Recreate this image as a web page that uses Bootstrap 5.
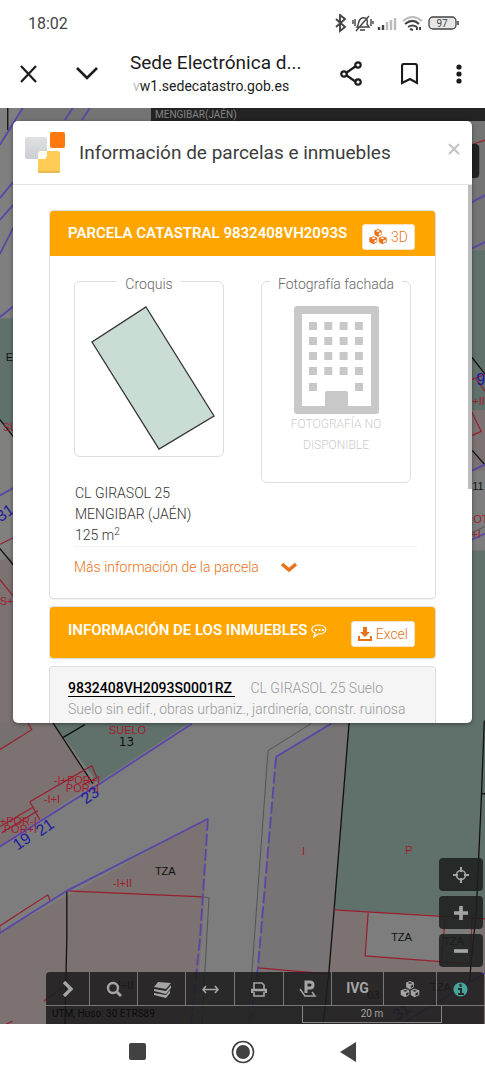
<!DOCTYPE html>
<html lang="es">
<head>
<meta charset="utf-8">
<meta name="viewport" content="width=device-width, initial-scale=1">
<title>Sede Electrónica del Catastro</title>
<link href="https://cdn.jsdelivr.net/npm/bootstrap@5.3.0/dist/css/bootstrap.min.css" rel="stylesheet">
<style>
  :root { --orange: #ffa500; --link: #e8731a; }
  body { font-family: Roboto, "Liberation Sans", sans-serif; color: #333; background: #fff; }
  button { font-family: inherit; }
  .status-row { height: 46px; padding: 2px 26px 0 28px; font-size: 16px; color: #444; }
  .browser-row { height: 62px; padding: 0 23px 6px 19px; color: #1c1c1c; }
  .plain-btn { border: 0; background: none; padding: 0; line-height: 0; color: inherit; }
  .collapse-btn { margin-left: 38px; }
  .page-name { margin-left: 32px; }
  .page-title { font-size: 19px; line-height: 24px; }
  .page-url { font-size: 14px; line-height: 22px; padding-left: 3px; }
  .faded { color: #bbb; }
  .browser-actions { gap: 38px; }
  .map-area { background: #7d7d7d; min-height: 0; }
  .map-drawing { inset: 0; width: 100%; height: 100%; }
  .map-drawing text { font-family: "Liberation Sans", sans-serif; font-size: 11px; }
  .map-drawing .street-no text { font-size: 16px; }
  .map-drawing .plot-no { font-family: "DejaVu Sans", sans-serif; font-size: 12px; }
  .place-bar { height: 13px; margin-left: 151px; padding-left: 4px; background: #232323; color: #858585; font-size: 10px; line-height: 13px; }
  .info-modal { margin: 0 13px 135px; border-radius: 5px; background: #fff; min-height: 0; box-shadow: 0 1px 4px rgba(0,0,0,.4); }
  .info-head { height: 64px; padding: 0 12px; border-bottom: 1px solid #e2e2e2; }
  .info-head h1 { font-size: 19px; line-height: 24px; margin: 0 0 0 14px; font-weight: 400; color: #3d3d3d; }
  .info-body { padding: 25px 36px 0; min-height: 0; font-weight: 300; font-size: 15px; line-height: 21px; }
  .scroll-thumb { top: 0; right: 0; width: 4px; height: 304px; background: #bdbdbd; }
  .panel-box { border: 1px solid #ddd; border-radius: 4px; margin-bottom: 7px; box-shadow: 0 1px 1px rgba(0,0,0,.05); }
  .panel-bar { background: var(--orange); color: #fff; padding: 13px 20px 6px 18px; border-radius: 3px 3px 0 0; }
  .panel-bar.alone { border-radius: 3px; padding-top: 14px; padding-bottom: 11px; }
  .panel-bar h2 { font-size: 15px; line-height: 18px; margin: 0; font-weight: 600; white-space: nowrap; }
  .white-btn { height: 26px; padding: 0 6px; font-size: 14px; font-weight: 300; line-height: 24px; background: #fff; color: var(--link); border: 1px solid #f3e3c4; border-radius: 3px; gap: 4px; }
  .parcel-body { padding: 12px 18px 20px 24px; }
  .pictures { display: grid; grid-template-columns: 1fr 1fr; gap: 37px; padding-right: 6px; align-items: start; }
  .pictures fieldset { border: 1px solid #ddd; border-radius: 6px; padding: 0; min-width: 0; text-align: center; }
  .pictures legend { float: none; width: auto; margin: 0 auto; padding: 6px 8px 0; font-size: 14px; line-height: 20px; color: #666; }
  .no-photo { font-size: 12px; line-height: 21px; color: #ccc; padding-bottom: 26px; }
  .parcel-text { padding-left: 1px; font-size: 14px; color: #333; border-bottom: 1px solid #f2f2f2; }
  .parcel-text sup { font-size: 10px; }
  .more-link { color: var(--link); font-size: 14px; line-height: 21px; margin-top: 10px; gap: 22px; text-decoration: none; }
  .unit-box { background: #f5f5f5; padding: 11px 18px; font-size: 14px; color: #999; white-space: nowrap; }
  .unit-box a { color: #000; font-weight: 500; text-decoration: none; border-bottom: 1px solid #000; margin-right: 12px; padding-right: 3px; }
  .zoom-tools { gap: 5px; margin: 0 2px 5px; }
  .zoom-tools button { width: 44px; height: 33px; border: 0; border-radius: 4px; background: rgba(28,32,31,.88); color: #a5a5a5; padding: 0; }
  .tool-bar { margin-left: 46px; margin-right: 1px; border-radius: 4px 4px 0 0; background: rgba(30,29,29,.87); color: #a5a5a5; }
  .tool-cells { display: grid; grid-template-columns: 44fr 48fr 48fr 49fr 49fr 48fr 52fr 53fr 47fr; border-bottom: 1px solid #777; }
  .tool-cells button { height: 33px; border: 0; border-right: 1px solid #777; background: none; color: inherit; padding: 0; font-size: 14px; font-weight: 700; }
  .tool-cells button:last-child { border-right: 0; color: #45a49c; }
  .scale-row { height: 18px; padding: 0 42px 1px 6px; font-size: 10px; line-height: 16px; }
  .scale-line { width: 140px; border: 1px solid #858585; border-top: 0; text-align: center; }
  .crs { color: #0c0c0c; }
  .phone-nav { height: 57px; color: #424242; }
  .nav-keys { gap: 85px; }
</style>
</head>
<body>
<svg width="0" height="0" class="position-absolute" aria-hidden="true">
  <symbol id="cubes" viewBox="0 0 24 22">
    <g fill="currentColor"><path d="M12 0l5 2v6l-5 3-5-3V2zM6 10l5 2v6l-5 3-6-3v-6zM18 10l6 2v6l-6 3-5-3v-6z"/></g>
    <g fill="var(--cut)"><path d="M12 1.500l3 1.200-3 1.300-3-1.300zM13 6l3-1.500v3L13 9zM6 11.500l3 1.200L6 14l-3-1.300zM7 16l3-1.500v3L7 19zM18 11.500l3 1.200-3 1.300-3-1.300zM19 16l3.500-1.500v3L19 19z"/></g>
  </symbol>
</svg>
<div class="vh-100 d-flex flex-column overflow-hidden">
  <header>
    <div class="status-row d-flex align-items-center justify-content-between">
      <span>18:02</span>
      <svg width="125" height="20" viewBox="334 14 125 20" fill="none" stroke="#444" stroke-width="1.600" aria-hidden="true">
        <path d="M336 19l9 8-5 4V15l5 4-9 8" stroke-width="1.900"/>
        <path d="M357 27c2-2 1-8 5-9 5-1 6 2 5 6l2 3zM356 31L369 16M360 30h5M353 20v4M355 19v7M371 19v7M373 21v3" stroke-width="1.400"/>
        <g stroke-width="2.400"><path d="M379 30v-3M383 30v-5"/><path stroke="#bbb" d="M387 30v-8M391 30v-10M395 30V18"/></g>
        <path d="M403 21c6-5 13-5 19 0" stroke="#bbb" stroke-width="2"/><path d="M405 24c5-4 10-4 14 0M408 27c3-2 6-2 9 0M410 29l3 1M417 30v-3M420 30v-3" stroke-width="2"/>
        <rect x="429" y="17" width="27" height="12" rx="4" fill="#e6e6e6" stroke-width="1.300"/><path d="M458 21v4"/>
        <text x="442" y="27" font-size="10" text-anchor="middle" fill="#444" stroke="none">97</text>
      </svg>
    </div>
    <div class="browser-row d-flex align-items-center">
      <button class="plain-btn" aria-label="Cerrar"><svg width="19" height="18" fill="none" stroke="currentColor" stroke-width="2.200"><path d="M2 1l15 16M17 1L2 17"/></svg></button>
      <button class="plain-btn collapse-btn" aria-label="Minimizar"><svg width="22" height="14" fill="none" stroke="currentColor" stroke-width="2.600"><path d="M1 1l10 10L21 1"/></svg></button>
      <div class="page-name me-auto text-nowrap">
        <div class="page-title">Sede Electrónica d...</div>
        <div class="page-url"><span class="faded">v</span>w1.sedecatastro.gob.es</div>
      </div>
      <div class="browser-actions d-flex align-items-center">
        <button class="plain-btn" aria-label="Compartir"><svg width="23" height="26" fill="none" stroke="currentColor" stroke-width="2.200"><path d="M6 12l10-7M6 14l10 7"/><circle cx="4" cy="13" r="2.700"/><circle cx="18" cy="4" r="2.700"/><circle cx="18" cy="21" r="2.700"/></svg></button>
        <button class="plain-btn" aria-label="Guardar"><svg width="17" height="22" viewBox="0 0 17 22" fill="none" stroke="currentColor" stroke-width="2.200"><path d="M1 3q0-2 2-2h11q2 0 2 2v17l-7-4-8 4z"/></svg></button>
        <button class="plain-btn" aria-label="Más opciones"><svg width="6" height="20" fill="currentColor"><circle cx="3" cy="3" r="2.600"/><circle cx="3" cy="10" r="2.600"/><circle cx="3" cy="17" r="2.600"/></svg></button>
      </div>
    </div>
  </header>

  <main class="map-area position-relative flex-grow-1 d-flex flex-column">
    <svg class="map-drawing position-absolute" viewBox="0 108 485 915" preserveAspectRatio="xMidYMid slice" aria-label="Mapa catastral">
      <path fill="#747474" d="M0 108h485v150H0z"/><path fill="#7f7f7f" d="M0 108h20v210H0z"/>
      <path fill="#60716b" d="M0 318h20v122L0 420zM53 722h137l-92 60z"/>
      <path fill="#80807f" d="M0 420l20 20v60H0zM0 500h14v220H0z"/>
      <path fill="#7c7271" d="M0 560l20-5v167h33l40 61L0 846zM0 932l207-114-4 110-9 96H0z"/>
      <path fill="#76716f" d="M0 722h30l2 7-32 20z"/>
      <path fill="#787374" d="M276 756l56-35h17l-22 303h-75z"/>
      <path fill="#60716b" d="M349 722h136v198l-10-4-141-7zM465 250h20v160h-20zM465 550h20v172h-20z"/>
      <path fill="#7c7271" d="M334 909l151 9v106H327z"/><path fill="#7d7d7d" d="M368 912l108 5-6 46-105-8z"/>
      <path fill="#7c7271" d="M465 410h20v60h-20z"/>
      <g fill="none" stroke="#111" stroke-width="1.300">
        <path d="M8 108v22M0 419l15 19M0 548l15 18M53 722l40 61M63 737l22-13M67 890v48l-2 86M349 722l-15 187-5 60-6 55M484 720l-3 80-5 110-7 72M481 793h4M470 355l15 19M472 450l13 15"/>
      </g>
      <g fill="none" stroke="#981f2e" stroke-width="1.200">
        <path d="M0 544l14-7M0 579l14 17M0 749l32-20-4-7M30 801l62-36 5 12-14 7M30 801l10 18M0 826l34-20M2 832l36-22M0 925l48-31 3 7M0 925v8M67 890l136 6M258 967l69 6M334 909l151 9M368 912l-3 43 105 8 2-50M445 917l-4 44M44 1000l20-14M470 380l15-6M476 379l9 12M472 435l9-4-10-20M470 145l15-5M5 1024l8-4"/>
      </g>
      <g fill="none" stroke="#5946a8" stroke-width="1.800">
        <path d="M0 254l23-45M0 145l23-37M0 198l15-18M0 220l15-17M0 317l15-12M65 120l8-12M82 120l8-12M0 495l15-8M0 846l100-63 92-60M0 932l67-42 141-72M276 756l55-33M470 203l15-8M470 249l15-7M470 471l15-7M470 540l15-7M400 1024l85-52"/>
        <path stroke-dasharray="12 3" d="M208 818l-8 120-9 86M276 756l-18 210-8 58"/>
      </g>
      <path fill="none" stroke="#555" d="M311 723l-43 27-20 274M203 896l6 1-7 127M470 533l15-7"/>
      <g fill="#a01e30">
        <text x="109" y="733">SUELO</text><text x="54" y="783">-I+POR+I</text><text x="66" y="791">POR+I</text><text x="44" y="802">-I+I</text>
        <text x="0" y="824">+POR-I</text><text x="4" y="832">POR+I</text><text x="113" y="886">-I+II</text>
        <text x="302" y="854">I</text><text x="405" y="853">P</text><text x="3" y="431">SUELO</text><text x="0" y="604">S+I</text><text x="472" y="405">+II</text><text x="473" y="523">OT</text><text x="471" y="538">+I</text>
      </g>
      <g fill="#111"><text x="119" y="745" class="plot-no">13</text><text x="155" y="874">TZA</text><text x="391" y="940">TZA</text><text x="443" y="944">TZA</text><text x="430" y="990">TZA</text><text x="6" y="361">E</text><text x="472" y="490">11</text><text x="118" y="988">I+II</text><text x="367" y="998">03</text></g>
      <g fill="#1c1ca0" class="street-no">
        <text transform="translate(86 804) rotate(-35)">23</text><text transform="translate(41 836) rotate(-35)">21</text><text transform="translate(18 850) rotate(-35)">19</text>
        <text transform="translate(1 522) rotate(-35)">31</text><text x="476" y="385">9</text><text transform="translate(397 1020) rotate(-35)">31</text>
      </g>
      <rect x="465" y="144" width="14" height="34" rx="4" fill="#222"/>
    </svg>

    <div class="place-bar position-relative">MENGIBAR(JAÉN)</div>

    <section class="info-modal position-relative flex-grow-1 d-flex flex-column overflow-hidden" role="dialog" aria-labelledby="info-title">
      <div class="info-head d-flex align-items-center flex-shrink-0">
        <svg width="40" height="42" aria-hidden="true"><defs><linearGradient id="g" x2="0" y2="1"><stop stop-color="#dfe2e3"/><stop offset="1" stop-color="#cccfd1"/></linearGradient></defs>
          <rect x="0" y="5" width="22" height="22" rx="2" fill="url(#g)"/><rect x="25" y="0" width="15" height="16" rx="2" fill="#ff7a0e"/><rect x="13" y="19" width="22" height="22" rx="2" fill="#fc5"/><path d="M13 40h22" stroke="#d7a64b"/><path d="M13 21l2-2h7v5l-2 3h-7z" fill="#fff"/></svg>
        <h1 id="info-title">Información de parcelas e inmuebles</h1>
        <button class="plain-btn ms-auto mb-2" aria-label="Cerrar"><svg width="12" height="12" fill="none" stroke="#c4c4c4" stroke-width="2.200"><path d="M1 1l10 10M11 1L1 11"/></svg></button>
      </div>
      <div class="info-body position-relative flex-grow-1 overflow-hidden">
        <div class="scroll-thumb position-absolute"></div>
        <article class="panel-box">
          <div class="panel-bar d-flex align-items-start justify-content-between">
            <h2>PARCELA CATASTRAL 9832408VH2093S</h2>
            <button class="white-btn d-flex align-items-center"><svg width="18" height="16" style="--cut:#fff"><use href="#cubes"/></svg>3D</button>
          </div>
          <div class="parcel-body">
            <div class="pictures">
              <fieldset><legend>Croquis</legend>
                <svg class="d-block mx-auto" width="148" height="162" viewBox="75 294 148 162" role="img" aria-label="Croquis de la parcela"><path d="M146 307l68 109-55 33-67-107z" fill="#c9ddd4" stroke="#333" stroke-width="1.300"/></svg>
              </fieldset>
              <fieldset><legend>Fotografía fachada</legend>
                <svg class="d-block mx-auto" width="85" height="120" viewBox="294 294 85 120" fill="#c8c8c8" aria-hidden="true"><path fill-rule="evenodd" d="M297 306h79q3 0 3 3v102q0 3-3 3h-79q-3 0-3-3V309q0-3 3-3zm5 8v92h23v-13q0-2 2-2h19q2 0 2 2v13h23v-92z"/>
                <path fill="none" stroke="#c8c8c8" stroke-width="8" stroke-dasharray="8 7.300" d="M309 326h54M309 341h54M309 356h54M309 371h54M309 387h8M355 387h8"/></svg>
                <div class="no-photo">FOTOGRAFÍA NO<br>DISPONIBLE</div>
              </fieldset>
            </div>
            <div class="parcel-text">CL GIRASOL 25<br>MENGIBAR (JAÉN)<br>125 m<sup>2</sup></div>
            <a href="#" class="more-link d-flex align-items-center">Más información de la parcela <svg width="16" height="11" fill="none" stroke="currentColor" stroke-width="3.600"><path d="M1 2l7 6 7-6"/></svg></a>
          </div>
        </article>
        <div class="panel-box">
          <div class="panel-bar alone d-flex align-items-start justify-content-between">
            <h2>INFORMACIÓN DE LOS INMUEBLES <svg width="16" height="14" fill="none" stroke="#fff" stroke-width="1.200"><path d="M8 1c9 0 9 9 0 9H7l-4 3 1-4C-1 7 0 1 8 1z"/><path stroke-width="2" stroke-dasharray="2 1.500" d="M4 6h9"/></svg></h2>
            <button class="white-btn d-flex align-items-center"><svg width="14" height="15" fill="none" stroke="currentColor" stroke-width="2"><path d="M1 9v4h12V9"/><path fill="currentColor" stroke="none" d="M5 0h4v5h3l-5 5-5-5h3z"/></svg>Excel</button>
          </div>
        </div>
        <div class="panel-box unit-box"><a href="#">9832408VH2093S0001RZ</a> CL GIRASOL 25 Suelo<br>Suelo sin edif., obras urbaniz., jardinería, constr. ruinosa</div>
      </div>
    </section>

    <div class="zoom-tools position-relative d-flex flex-column align-items-end">
      <button aria-label="Mi ubicación"><svg width="16" height="16" fill="none" stroke="currentColor" stroke-width="2"><circle cx="8" cy="8" r="4.500" stroke-width="1.600"/><path d="M8 0v5M8 11v5M0 8h5M11 8h5"/></svg></button>
      <button aria-label="Acercar"><svg width="14" height="14" stroke="currentColor" stroke-width="3.600"><path d="M7 0v14M0 7h14"/></svg></button>
      <button aria-label="Alejar"><svg width="14" height="14" stroke="currentColor" stroke-width="3.600"><path d="M0 7h14"/></svg></button>
    </div>
    <div class="tool-bar position-relative">
      <div class="tool-cells">
        <button aria-label="Desplegar"><svg width="12" height="16" fill="none" stroke="currentColor" stroke-width="3.400"><path d="M2 1l7 7-7 7"/></svg></button>
        <button aria-label="Buscar"><svg width="16" height="16" fill="none" stroke="currentColor" stroke-width="2.400"><circle cx="7" cy="7" r="5"/><path d="M11 11l4 4" stroke-width="3"/></svg></button>
        <button aria-label="Capas"><svg width="18" height="17" fill="currentColor"><path d="M5 1l13 1-5 6-12-2zM1 8l12 2 5-6v3l-5 6-12-3zM1 12l12 2 4-5v3l-4 5-12-3z"/></svg></button>
        <button aria-label="Medir"><svg width="17" height="9" fill="none" stroke="currentColor" stroke-width="1.600"><path d="M1 4.500h15M4 1L1 4.500 4 8M13 1l3 3.500L13 8"/></svg></button>
        <button aria-label="Imprimir"><svg width="16" height="15" fill="none" stroke="currentColor" stroke-width="1.600"><path d="M3 7V1h8l2 2v4M3 10v4h10v-4"/><path d="M1 11V8h14v3" stroke-width="2.600"/></svg></button>
        <button aria-label="Parcela"><svg width="18" height="18" fill="none" stroke="currentColor"><path d="M7 13V2h4q3 0 3 3t-3 3H7" stroke-width="3"/><path d="M1 9l5 7h10l-3-4" stroke-width="1.500"/></svg></button>
        <button>IVG</button>
        <button aria-label="Vista 3D"><svg width="20" height="17" style="--cut:#292828"><use href="#cubes"/></svg></button>
        <button aria-label="Información"><svg width="15" height="15"><circle cx="7.500" cy="7.500" r="7" fill="currentColor"/><path d="M7.500 2v3M5 7h3v5M5 12h6" fill="none" stroke="#292828" stroke-width="2"/></svg></button>
      </div>
      <div class="scale-row d-flex justify-content-between"><span class="crs">UTM, Huso: 30 ETRS89</span><div class="scale-line">20 m</div></div>
    </div>
  </main>

  <nav class="phone-nav position-relative" aria-label="Navegación">
    <div class="nav-keys h-100 d-flex align-items-center justify-content-center">
      <button class="plain-btn" aria-label="Recientes"><svg width="17" height="17"><rect width="17" height="17" rx="2" fill="currentColor"/></svg></button>
      <button class="plain-btn" aria-label="Inicio"><svg width="24" height="24"><circle cx="12" cy="12" r="10.500" fill="none" stroke="currentColor" stroke-width="1.600"/><circle cx="12" cy="12" r="7" fill="currentColor"/></svg></button>
      <button class="plain-btn" aria-label="Atrás"><svg width="16" height="20"><path d="M16 0v20L0 10z" fill="currentColor"/></svg></button>
    </div>
  </nav>
</div>
<script src="https://cdn.jsdelivr.net/npm/bootstrap@5.3.0/dist/js/bootstrap.bundle.min.js"></script>
</body>
</html>
